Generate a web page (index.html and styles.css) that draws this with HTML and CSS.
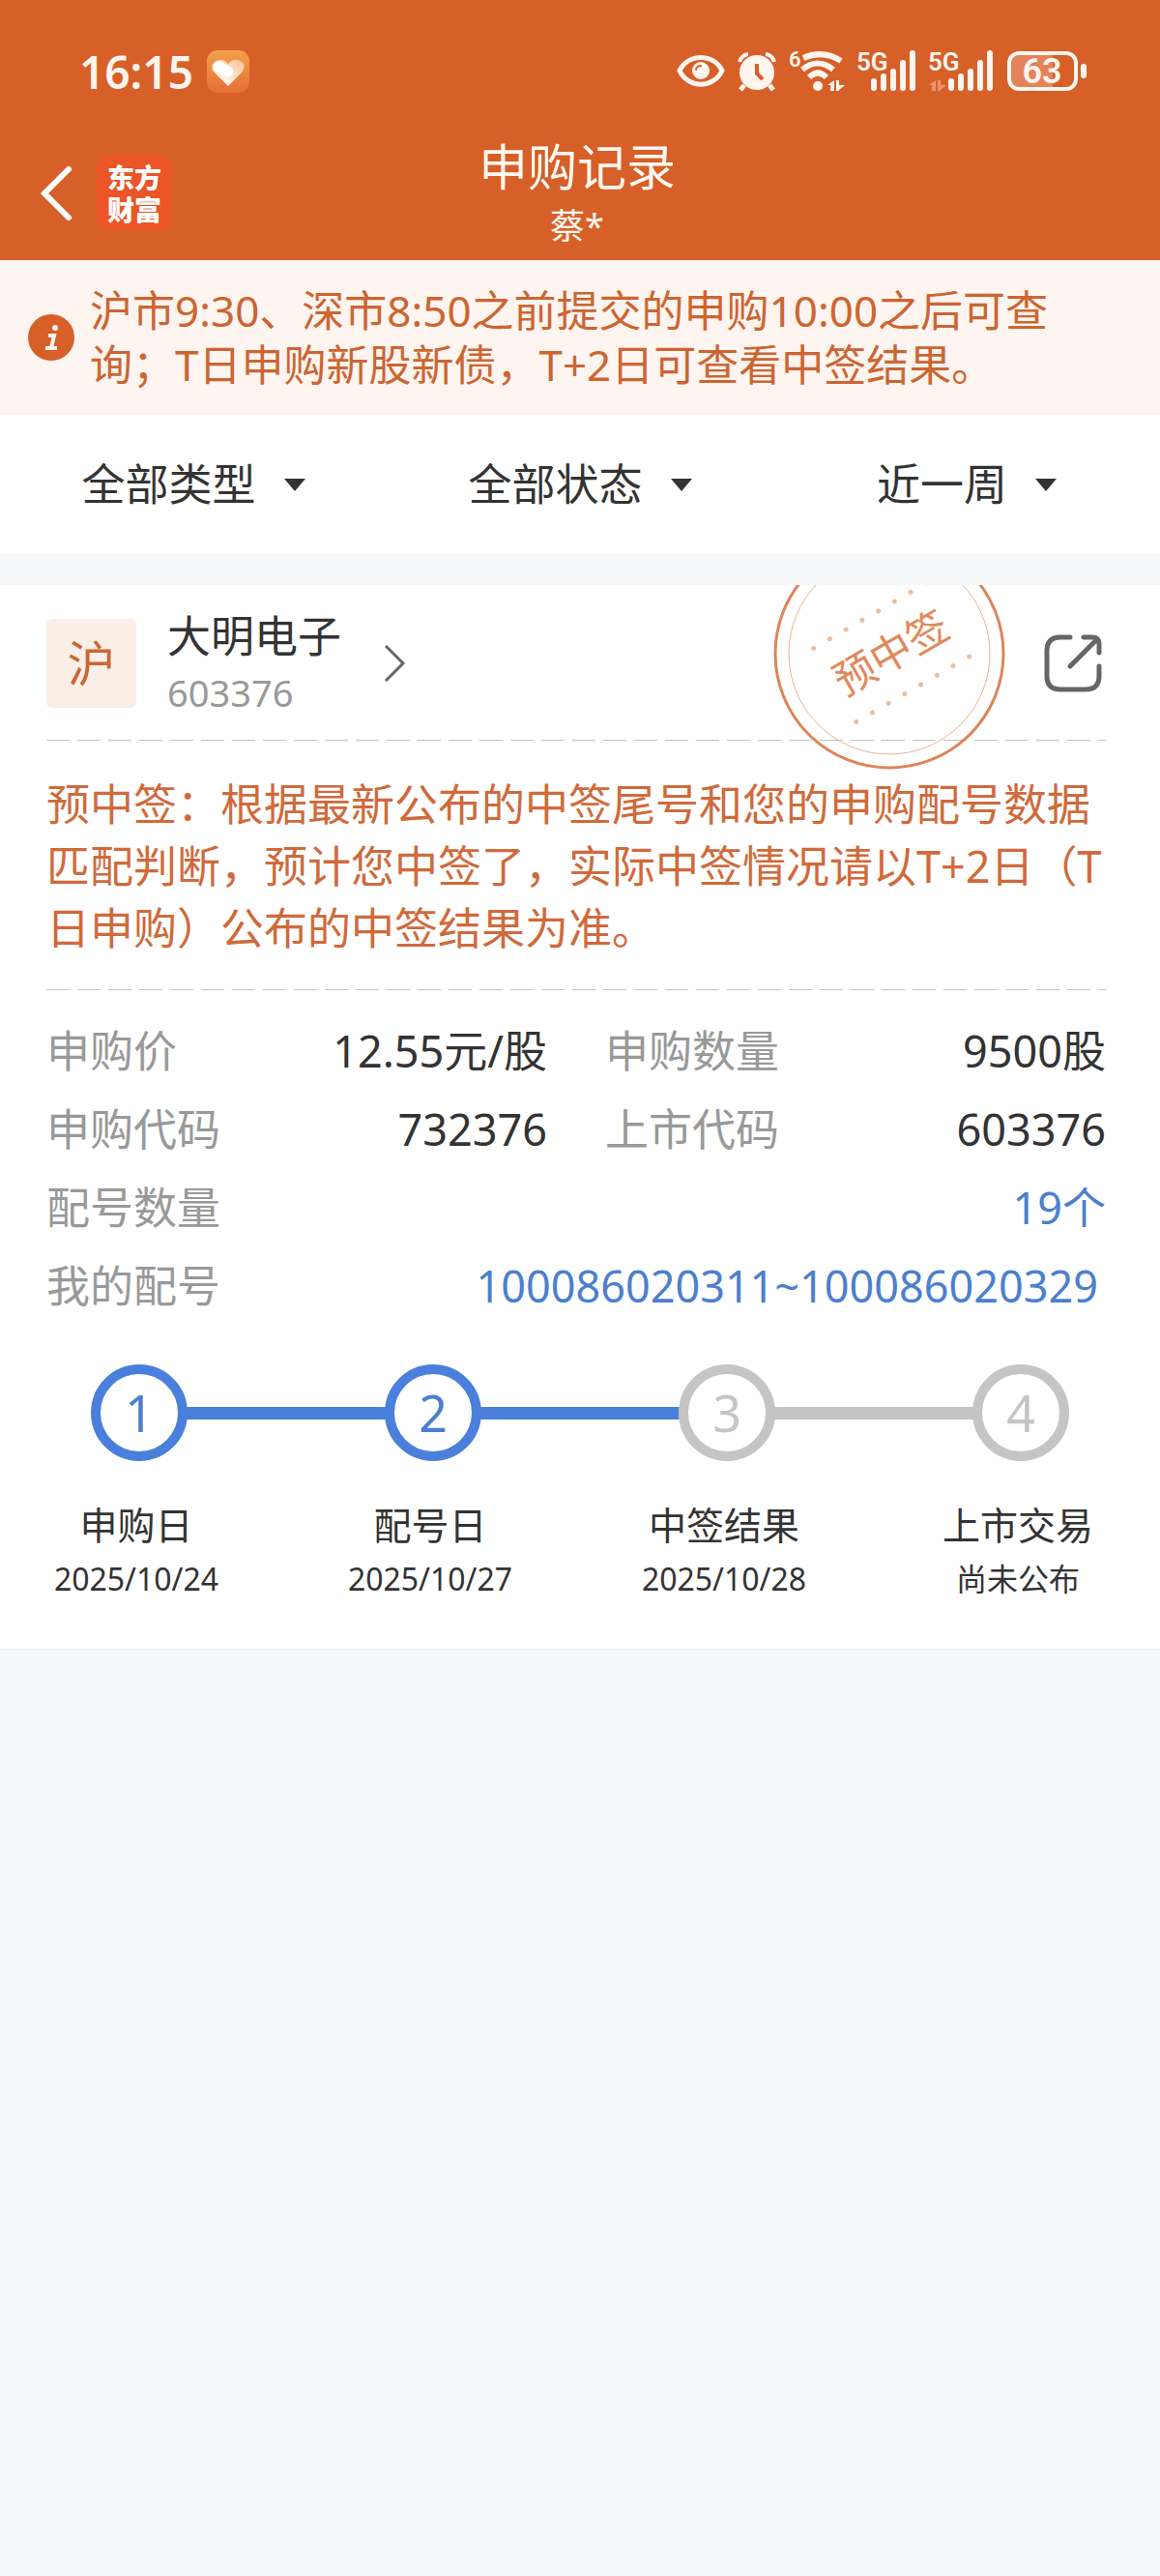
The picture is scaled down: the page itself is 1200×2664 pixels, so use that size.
FILE: index.html
```html
<!DOCTYPE html>
<html lang="zh-CN">
<head>
  <meta charset="UTF-8">
  <meta name="viewport" content="width=device-width, initial-scale=1.0">
  <title>申购记录</title>
  <link rel="stylesheet" href="styles.css">
</head>
<body>

  <header class="header">
    <div class="status-bar">
      <span class="time">16:15</span>
      <svg class="app-badge" width="44" height="44" viewBox="0 0 44 44">
        <defs>
          <linearGradient id="badge-bg" x1="0" y1="0" x2="0" y2="1">
            <stop offset="0" stop-color="#f3a04c"/>
            <stop offset="1" stop-color="#e66f34"/>
          </linearGradient>
          <linearGradient id="heart" x1="0" y1="1" x2="1" y2="0">
            <stop offset="0.3" stop-color="#fff3ea"/>
            <stop offset="1" stop-color="#f8c48e"/>
          </linearGradient>
        </defs>
        <rect width="44" height="44" rx="11" fill="url(#badge-bg)"/>
        <path d="M22 37 L8 23 C2 16 8 9 15 10 C18 10 20 12 22 14 C24 12 26 10 29 10 C37 9 42 16 36 23 Z" fill="url(#heart)"/>
        <path d="M13 17 L22 22" stroke="#fff" stroke-width="11" stroke-linecap="round"/>
      </svg>

      <div class="status-icons">
        <svg width="50" height="44" viewBox="0 0 50 44">
          <path d="M3 21 C12 3 38 3 47 21 C38 40 12 40 3 21 Z" fill="none" stroke="#fff5ef" stroke-width="5"/>
          <circle cx="25" cy="21" r="9" fill="#fff5ef"/>
          <path d="M20 20 Q21 16 25 16" fill="none" stroke="#d75f28" stroke-width="2" stroke-linecap="round"/>
        </svg>
        <svg width="42" height="44" viewBox="0 0 42 44">
          <circle cx="21" cy="23" r="18" fill="#fff5ef"/>
          <path d="M3 12 Q5 5 12 4 M39 12 Q37 5 30 4" fill="none" stroke="#fff5ef" stroke-width="4"/>
          <path d="M8 36 L4 41 M34 36 L38 41" stroke="#fff5ef" stroke-width="5"/>
          <path d="M21 14 V24 L27 30" fill="none" stroke="#d75f28" stroke-width="4"/>
        </svg>
        <svg width="58" height="44" viewBox="0 0 58 44">
          <text class="net" x="0" y="17" font-size="22">6</text>
          <path d="M15 8 Q35 -1 54 11" fill="none" stroke="#fff5ef" stroke-width="6"/>
          <path d="M14 20 Q30 7 46 20" fill="none" stroke="#fff5ef" stroke-width="6"/>
          <path d="M21 28 Q30 19 39 28" fill="none" stroke="#fff5ef" stroke-width="6"/>
          <circle cx="30" cy="37" r="5" fill="#fff5ef"/>
          <path d="M40 36 L47 31 V42 H43 V36 Z M49 31 H52 V36 H58 L51 42 H49 Z" fill="#fff5ef"/>
        </svg>
        <svg width="62" height="44" viewBox="0 0 62 44">
          <text class="net" x="0" y="21" font-size="26">5G</text>
          <path d="M18 32 V39 M28 27 V39 M38 22 V39 M48 13 V39 M58 3 V39" stroke="#fff5ef" stroke-width="6" stroke-linecap="round"/>
        </svg>
        <svg width="68" height="44" viewBox="0 0 68 44">
          <text class="net" x="0" y="21" font-size="26">5G</text>
          <path d="M1 36 L8 31 V42 H4 V36 Z M10 31 H13 V36 H19 L12 42 H10 Z" fill="#eb946c"/>
          <path d="M24 32 V39 M34 27 V39 M44 22 V39 M54 13 V39 M64 3 V39" stroke="#fff5ef" stroke-width="6" stroke-linecap="round"/>
        </svg>
        <svg width="84" height="44" viewBox="0 0 84 44">
          <path d="M14 5 H49 V38 H14 Q5 38 5 29 V14 Q5 5 14 5 Z" fill="#e38458"/>
          <rect x="4" y="3" width="69" height="37" rx="10" fill="none" stroke="#fff5ef" stroke-width="4"/>
          <rect x="78" y="14" width="6" height="15" rx="3" fill="#fff5ef"/>
          <text class="net" x="38" y="34" font-size="36" text-anchor="middle">63</text>
        </svg>
      </div>
    </div>

    <div class="nav">
      <div class="nav-left">
        <button class="icon-btn" aria-label="返回">
          <svg width="38" height="62" viewBox="0 0 38 62">
            <path d="M33 6 L8 31 L33 56" fill="none" stroke="#fff" stroke-width="6" stroke-linecap="round"/>
          </svg>
        </button>
        <a class="logo" href="#">东方<br>财富</a>
      </div>
      <div class="nav-title">
        <h1>申购记录</h1>
        <p>蔡*</p>
      </div>
    </div>
  </header>

  <div class="notice">
    <svg class="notice-icon" width="48" height="48" viewBox="0 0 48 48">
      <circle cx="24" cy="24" r="24" fill="#d75f28"/>
      <circle cx="28" cy="14" r="3" fill="#fff5ef"/>
      <path d="M21 22 H27 L24 35 M18 35 H30" fill="none" stroke="#fff5ef" stroke-width="4"/>
    </svg>
    <p>沪市9:30、深市8:50之前提交的申购10:00之后可查询；T日申购新股新债，T+2日可查看中签结果。</p>
  </div>

  <div class="filters">
    <div class="filter">
      <select aria-label="类型">
        <option>全部类型</option>
        <option>新股</option>
        <option>新债</option>
      </select>
    </div>
    <div class="filter">
      <select aria-label="状态">
        <option>全部状态</option>
        <option>已中签</option>
        <option>未中签</option>
      </select>
    </div>
    <div class="filter">
      <select aria-label="时间">
        <option>近一周</option>
        <option>近一月</option>
        <option>近一年</option>
      </select>
    </div>
  </div>

  <main class="card">
    <svg class="stamp" width="240" height="240" viewBox="0 0 240 240">
      <circle cx="120" cy="120" r="118" fill="none" stroke="#dd8558" stroke-width="3"/>
      <circle cx="120" cy="120" r="104" fill="none" stroke="#e8b498" stroke-width="1"/>
      <g transform="rotate(-30 120 120)">
        <text x="122" y="136" text-anchor="middle">预中签</text>
        <path d="M55 76 H192 M55 164 H192" stroke="#ebbda4" stroke-width="5" stroke-linecap="round" stroke-dasharray="0 19.3"/>
      </g>
    </svg>

    <div class="card-head">
      <span class="market">沪</span>
      <a class="stock" href="#">
        <span class="stock-text">
          <span class="stock-name">大明电子</span>
          <span class="stock-code">603376</span>
        </span>
        <svg width="24" height="40" viewBox="0 0 24 40">
          <path d="M2 2 L20 20 L2 38" fill="none" stroke="#666" stroke-width="3"/>
        </svg>
      </a>
      <button class="icon-btn share" aria-label="分享">
        <svg width="60" height="60" viewBox="0 0 60 60">
          <path d="M27 3 H17 Q3 3 3 17 V43 Q3 57 17 57 H43 Q57 57 57 43 V33 M41 3 H50 Q57 3 57 10 V19 M55 5 L27 33" fill="none" stroke="#666" stroke-width="5" stroke-linecap="round"/>
        </svg>
      </button>
    </div>

    <p class="tip">预中签：根据最新公布的中签尾号和您的申购配号数据匹配判断，预计您中签了，实际中签情况请以T+2日（T日申购）公布的中签结果为准。</p>

    <dl class="info">
      <div><dt>申购价</dt><dd>12.55元/股</dd></div>
      <div><dt>申购数量</dt><dd>9500股</dd></div>
      <div><dt>申购代码</dt><dd>732376</dd></div>
      <div><dt>上市代码</dt><dd>603376</dd></div>
      <div class="full"><dt>配号数量</dt><dd><a href="#">19个</a></dd></div>
      <div class="full"><dt>我的配号</dt><dd><a class="range" href="#">100086020311~100086020329</a></dd></div>
    </dl>

    <div class="steps">
      <span class="dot done">1</span>
      <span class="line done"></span>
      <span class="dot done">2</span>
      <span class="line done"></span>
      <span class="dot">3</span>
      <span class="line"></span>
      <span class="dot">4</span>
    </div>
    <ol class="step-labels">
      <li><strong>申购日</strong><span>2025/10/24</span></li>
      <li><strong>配号日</strong><span>2025/10/27</span></li>
      <li><strong>中签结果</strong><span>2025/10/28</span></li>
      <li><strong>上市交易</strong><span>尚未公布</span></li>
    </ol>
  </main>

</body>
</html>
```
FILE: styles.css
```css
* {
  box-sizing: border-box;
}

body {
  margin: 0;
  font-family: "Noto Sans", "Noto Sans CJK SC", sans-serif;
  font-size: 45px;
  color: #333;
  background: #f6f8fa;
}

h1, p, dl, dd, ol {
  margin: 0;
  padding: 0;
}

a {
  color: inherit;
  text-decoration: none;
}

svg {
  display: block;
  overflow: visible;
}

.icon-btn {
  padding: 0;
  border: none;
  background: none;
  cursor: pointer;
}

/* header */
.header {
  background: #d75f28;
  color: #fff8ef;
  padding-bottom: 7px;
}

.status-bar {
  display: flex;
  align-items: center;
  padding: 50px 76px 0 82px;
  color: #fff5ef;
}

.time {
  font-size: 46px;
  font-weight: 600;
  line-height: 48px;
}

.app-badge {
  margin-left: 14px;
}

.status-icons {
  display: flex;
  gap: 12px;
  margin-left: auto;
}

.net {
  fill: #fff5ef;
  font-family: "Roboto", sans-serif;
  font-weight: 600;
}

.nav {
  display: grid;
  grid-template-columns: 1fr auto 1fr;
  align-items: center;
  padding: 40px 44px 0 38px;
}

.nav-left {
  display: flex;
  align-items: center;
  gap: 24px;
}

.logo {
  width: 78px;
  padding: 6px 0;
  border-radius: 15px;
  background: #eb5527;
  color: #fff;
  font-family: "Noto Sans CJK SC", sans-serif;
  font-size: 28px;
  font-weight: 900;
  line-height: 33px;
  text-align: center;
}

.nav-title {
  text-align: center;
}

.nav-title h1 {
  font-size: 51px;
  font-weight: normal;
  line-height: 68px;
}

.nav-title p {
  font-size: 36px;
  line-height: 56px;
}

/* notice */
.notice {
  display: flex;
  align-items: center;
  gap: 16px;
  padding: 24px 90px 24px 29px;
  background: #fef4f0;
  color: #cc6531;
  font-size: 44px;
  line-height: 56px;
}

.notice-icon {
  flex: none;
}

/* filters */
.filters {
  display: grid;
  grid-template-columns: repeat(3, 1fr);
  background: #fff;
  margin-bottom: 32px;
}

.filter {
  display: flex;
  align-items: center;
  justify-content: center;
  gap: 28px;
  height: 144px;
}

.filter select {
  appearance: none;
  padding: 0;
  border: none;
  background: none;
  color: #333;
  font: inherit;
  line-height: 64px;
}

.filter::after {
  content: "";
  border: 11px solid transparent;
  border-top: 13px solid #333;
  border-bottom: none;
}

/* record card */
.card {
  position: relative;
  overflow: hidden;
  padding: 0 48px 46px;
  background: #fff;
  border-bottom: 1px solid #e8ebee;
}

.stamp {
  position: absolute;
  top: -49px;
  right: 160px;
}

.stamp text {
  fill: #e08a5b;
  font-size: 43px;
}

.card-head,
.tip {
  margin-right: 8px;
  background-image: linear-gradient(to right, #c4c4c4 75%, transparent 75%);
  background-size: 32px 1px;
  background-position: left bottom;
  background-repeat: repeat-x;
}

.card-head {
  display: flex;
  align-items: center;
  height: 161px;
}

.market {
  width: 93px;
  border-radius: 6px;
  background: #faeee6;
  color: #cc6531;
  font-size: 50px;
  line-height: 92px;
  text-align: center;
}

.stock {
  display: flex;
  align-items: center;
  gap: 44px;
  margin-left: 32px;
}

.stock-text {
  display: flex;
  flex-direction: column;
}

.stock-name {
  line-height: 60px;
}

.stock-code {
  color: #999;
  font-size: 38px;
  line-height: 56px;
}

.share {
  margin-left: auto;
  margin-right: 4px;
}

.tip {
  padding: 34px 0 32px;
  color: #d06a3b;
  line-height: 64px;
}

.info {
  display: grid;
  grid-template-columns: 1fr 1fr;
  column-gap: 60px;
  padding: 22px 8px 0 0;
  line-height: 81px;
}

.info div {
  display: flex;
  justify-content: space-between;
}

.info .full {
  grid-column: 1 / 3;
}

.info dt {
  color: #999;
}

.info a {
  color: #4c7fce;
}

.info .range {
  padding-right: 8px;
}

/* progress */
.steps {
  display: flex;
  align-items: center;
  padding: 41px 46px 0;
}

.dot {
  width: 100px;
  height: 100px;
  border: 10px solid #c5c5c5;
  border-radius: 50%;
  color: #c5c5c5;
  font-size: 52px;
  line-height: 80px;
  text-align: center;
}

.line {
  flex: 1;
  height: 13px;
  margin: 0 -1px;
  background: #c5c5c5;
}

.dot.done {
  border-color: #4a80dc;
  color: #4c7fce;
}

.line.done {
  background: #4a80dc;
}

.step-labels {
  display: flex;
  justify-content: space-between;
  padding-top: 36px;
  list-style: none;
  text-align: center;
}

.step-labels li {
  width: 192px;
  padding-right: 6px;
}

.step-labels strong,
.step-labels span {
  display: block;
  font-weight: normal;
}

.step-labels strong {
  font-size: 39px;
  line-height: 60px;
}

.step-labels span {
  font-size: 32px;
  line-height: 52px;
}
```
